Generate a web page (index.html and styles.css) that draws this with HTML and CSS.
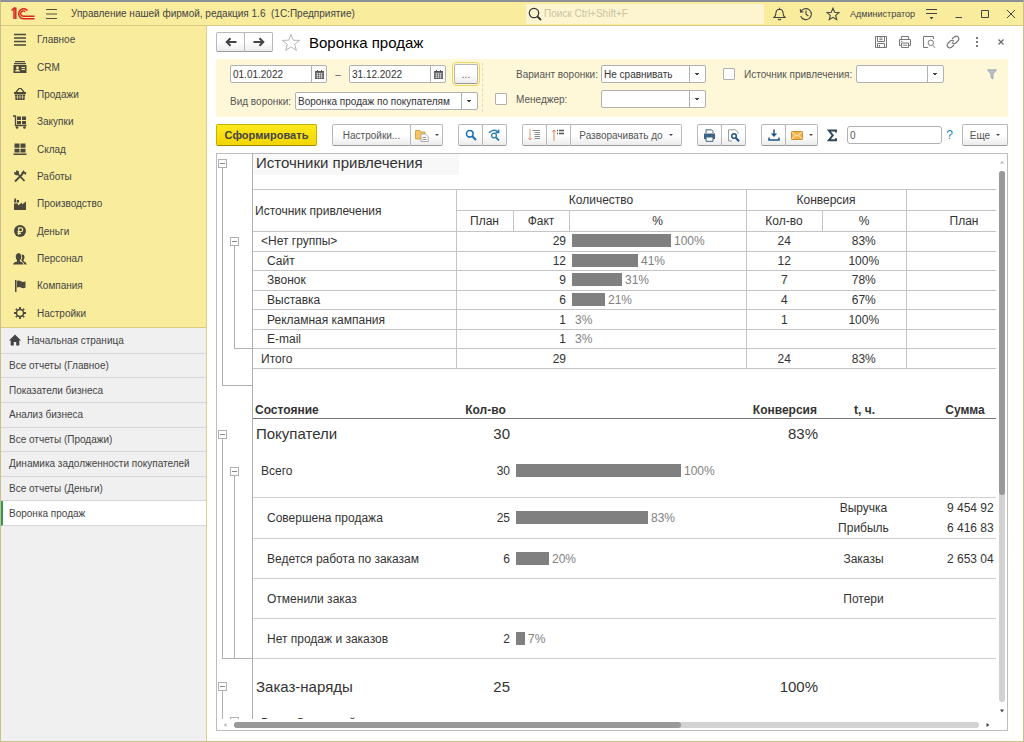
FILE: index.html
```html
<!DOCTYPE html>
<html lang="ru">
<head>
<meta charset="utf-8">
<meta name="viewport" content="width=device-width, initial-scale=1">
<title>Воронка продаж</title>
<link rel="stylesheet" href="styles.css">
</head>

<body>
<div class="window">

<header class="titlebar">
  <svg class="logo" width="24" height="13" viewBox="0 0 24 13" fill="none" stroke="#d9251c">
    <path d="M0.5 3.5L3 1.2V12M3 1.2H4.8V12" stroke-width="1.5"/>
    <path d="M16.5 3.6A5 5 0 1 0 12.5 11.8H23.5" stroke-width="1.5"/>
    <path d="M14.3 4.8A2.7 2.7 0 1 0 12.5 9.3H23.5" stroke-width="1.4"/>
  </svg>
  <button class="flat" aria-label="Меню">
    <svg width="13" height="12" viewBox="0 0 13 12" stroke="#55513a"><path d="M1 1.5H12M1 6H12M1 10.5H12"/></svg>
  </button>
  <span class="app-name">Управление нашей фирмой, редакция 1.6&nbsp; (1С:Предприятие)</span>
  <label class="search">
    <svg width="14" height="14" viewBox="0 0 14 14" fill="none" stroke="#333"><circle cx="6" cy="6" r="4.7" stroke-width="1.2"/><path d="M9.5 9.5L13 13" stroke-width="1.8"/></svg>
    <input type="text" placeholder="Поиск Ctrl+Shift+F">
  </label>
  <div class="title-tools">
    <button class="flat" aria-label="Оповещения">
      <svg width="13" height="14" viewBox="0 0 13 14" fill="none" stroke="#444"><path d="M1 10.5Q3 9 3 5.5Q3.2 2.5 6.5 2.2Q9.8 2.5 10 5.5Q10 9 12 10.5ZM6.5 2V0.8M5 12Q6.5 13.6 8 12" stroke-width="1.1"/></svg>
    </button>
    <button class="flat" aria-label="История">
      <svg width="14" height="14" viewBox="0 0 14 14" fill="none" stroke="#444"><path d="M1.8 5A5.5 5.5 0 1 1 1.7 9M1.2 2.2L1.7 5.2L4.6 4.8M7 3.6V7.3L9.4 9" stroke-width="1.1"/></svg>
    </button>
    <button class="flat" aria-label="Избранное">
      <svg width="14" height="14" viewBox="0 0 14 14" fill="none" stroke="#444"><path d="M7 1.2L8.7 5.2L13 5.6L9.7 8.4L10.7 12.7L7 10.4L3.3 12.7L4.3 8.4L1 5.6L5.3 5.2Z" stroke-width="1.1"/></svg>
    </button>
    <a class="user" href="#">Администратор</a>
    <button class="flat" aria-label="Сервис">
      <svg width="13" height="12" viewBox="0 0 13 12" stroke="#444"><path d="M1 1.5H12M1 5.5H12"/><path d="M4.5 9H8.5L6.5 11.5Z" fill="#444" stroke="none"/></svg>
    </button>
  </div>
  <div class="window-tools">
    <button class="flat" aria-label="Свернуть"><svg width="10" height="10" viewBox="0 0 10 10" stroke="#444"><path d="M1.5 8.5H8"/></svg></button>
    <button class="flat" aria-label="Развернуть"><svg width="10" height="10" viewBox="0 0 10 10" fill="none" stroke="#444"><path d="M1.5 1.5H8.5V8.5H1.5Z"/></svg></button>
    <button class="flat" aria-label="Закрыть"><svg width="10" height="10" viewBox="0 0 10 10" stroke="#444"><path d="M1 1L9 9M9 1L1 9"/></svg></button>
  </div>
</header>

<div class="workspace">

<aside class="sidebar">
  <nav class="sections">
    <a href="#"><svg viewBox="0 0 14 14"><path d="M1 1.5H13M1 5H13M1 8.5H13M1 12H13" stroke="#4b483c" stroke-width="1.5"/></svg>Главное</a>
    <a href="#"><svg viewBox="0 0 14 14"><path d="M2 1H12V2.2H2ZM1 3H13V4.2H1ZM0.5 5H13.5V13H0.5Z"/><path d="M2 11.5Q2 9.5 4.5 9.3Q7 9.5 7 11.5ZM4.5 6.3A1.4 1.4 0 1 1 4.4 6.3ZM8.5 7H12V8H8.5ZM8.5 9H12V10H8.5Z" fill="#f9ec9c"/></svg>CRM</a>
    <a href="#"><svg viewBox="0 0 14 14"><path d="M1 5H13V7H1ZM1.7 7.5H12.3L11.5 13H2.5Z"/><path d="M3 5L6 1.5H8L11 5" fill="none" stroke="#4b483c" stroke-width="1.2"/><path d="M4.5 8V12.5M7 8V12.5M9.5 8V12.5M2 10H12" stroke="#f9ec9c" stroke-width="0.6"/></svg>Продажи</a>
    <a href="#"><svg viewBox="0 0 14 14"><path d="M0 1H2.5V10.5H13.5" fill="none" stroke="#4b483c" stroke-width="1.3"/><path d="M4 1.5H8V5H4ZM9 1.5H13V5H9ZM4 6H8V9.2H4ZM9 6H13V9.2H9Z"/><circle cx="4" cy="12.5" r="1.3"/><circle cx="11.5" cy="12.5" r="1.3"/></svg>Закупки</a>
    <a href="#"><svg viewBox="0 0 14 14"><path d="M1.5 1.5H6.5V5.7H1.5ZM7.5 1.5H12.5V5.7H7.5ZM1.5 6.7H6.5V10.5H1.5ZM7.5 6.7H12.5V10.5H7.5ZM0.5 11.5H13.5V13H0.5Z"/></svg>Склад</a>
    <a href="#"><svg viewBox="0 0 14 14"><path d="M4 4L11.5 12M9.5 5L2 12.5" stroke="#4b483c" stroke-width="1.8"/><path d="M1 3L3 3.2L3.5 1L6 2.5V5L4 6.5L1.5 5.5ZM8 4L11 1L11.3 2.7L13.5 3.5L12.5 6L11 4.5L9.5 6Z"/></svg>Работы</a>
    <a href="#"><svg viewBox="0 0 14 14"><path d="M1 6.5H5V8.5L9 5.5V7.5L13 4.5V13H1ZM1 5.5L1.5 1.5H3L3.5 5.5ZM4 5.5V3H6V5.5Z"/></svg>Производство</a>
    <a href="#"><svg viewBox="0 0 14 14"><circle cx="7" cy="7" r="6"/><path d="M5.7 11V3.8H7.8A1.9 1.9 0 0 1 7.8 7.6H4.5M4.5 9.3H8" fill="none" stroke="#f9ec9c" stroke-width="1.2"/></svg>Деньги</a>
    <a href="#"><svg viewBox="0 0 14 14"><path d="M0 12.5Q0.5 10 4 9.5L4 8Q2.5 6.5 2.8 3.5Q3.5 1 5.5 1Q7.7 1 8.2 3.5Q8.5 6.5 7 8V9.5Q10 10 10.5 12.5Z"/><path d="M8.8 2.5Q11.5 2 11.5 5Q11.4 7 10.5 8V9Q13.5 10 13.8 12.5H11.5Q11 10.5 8.5 9L8.3 8Q9.8 6 8.8 2.5Z"/></svg>Персонал</a>
    <a href="#"><svg viewBox="0 0 14 14"><path d="M2 1H3.5V13H2ZM4 2Q6 1 8 2.3Q10 3.5 12.5 2.3V8.5Q10 9.8 8 8.5Q6 7.3 4 8.5Z"/></svg>Компания</a>
    <a href="#"><svg viewBox="0 0 14 14" stroke="#4b483c"><circle cx="7" cy="7" r="3.5" stroke-width="1.5" fill="none"/><path d="M7 1V3M7 11V13M1 7H3M11 7H13M2.8 2.8L4.2 4.2M9.8 9.8L11.2 11.2M2.8 11.2L4.2 9.8M9.8 4.2L11.2 2.8" stroke-width="1.8"/></svg>Настройки</a>
  </nav>
  <nav class="tabs">
    <a class="home" href="#"><svg width="12" height="12" viewBox="0 0 12 12" fill="#444"><path d="M6 0.5L12 6.5H10.3V11.5H7.2V8H4.8V11.5H1.7V6.5H0Z"/></svg>Начальная страница</a>
    <a href="#">Все отчеты (Главное)</a>
    <a href="#">Показатели бизнеса</a>
    <a href="#">Анализ бизнеса</a>
    <a href="#">Все отчеты (Продажи)</a>
    <a href="#">Динамика задолженности покупателей</a>
    <a href="#">Все отчеты (Деньги)</a>
    <a class="active" href="#">Воронка продаж</a>
  </nav>
</aside>

<main class="form">
  <div class="form-head">
    <div class="btn-group">
      <button class="btn nav-btn" aria-label="Назад"><svg width="12" height="10" viewBox="0 0 12 10" fill="none" stroke="#444" stroke-width="2"><path d="M11.5 5H2M5.5 1.2L1.7 5L5.5 8.8"/></svg></button>
      <button class="btn nav-btn" aria-label="Вперед"><svg width="12" height="10" viewBox="0 0 12 10" fill="none" stroke="#444" stroke-width="2"><path d="M0.5 5H10M6.5 1.2L10.3 5L6.5 8.8"/></svg></button>
    </div>
    <button class="flat" aria-label="В избранное">
      <svg width="20" height="19" viewBox="0 0 20 19" fill="none" stroke="#b4b4b4"><path d="M10 1.5L12.2 7.2L18.6 7.4L13.6 11.3L15.4 17.4L10 13.8L4.6 17.4L6.4 11.3L1.4 7.4L7.8 7.2Z"/></svg>
    </button>
    <h1>Воронка продаж</h1>
    <div class="form-tools">
      <button class="flat" aria-label="Сохранить"><svg width="14" height="14" viewBox="0 0 14 14" fill="none" stroke="#777"><path d="M1.5 1.5H12.5V12.5H1.5ZM3.5 1.5V6.5H10.5V1.5M3.5 12.5V8.5H10.5V12.5M5.5 3H8.5M5.5 4.7H8.5M5.5 10V12"/></svg></button>
      <button class="flat" aria-label="Печать"><svg width="14" height="14" viewBox="0 0 14 14" fill="none" stroke="#777"><path d="M3.5 4.5V1.5H10.5V4.5M3 10.5H1.5V4.5H12.5V10.5H11M3.5 8H10.5V12.5H3.5ZM5 10.2H9M3 6.3H4.5"/></svg></button>
      <button class="flat" aria-label="Просмотр"><svg width="14" height="14" viewBox="0 0 14 14" fill="none" stroke="#777"><path d="M6 12.5H1.5V1.5H11.5V4M10.8 10.2L13 12.8"/><circle cx="8.8" cy="7.8" r="2.7"/></svg></button>
      <button class="flat" aria-label="Ссылка"><svg width="14" height="14" viewBox="0 0 14 14" fill="none" stroke="#777" stroke-width="1.2"><path d="M6 4L8.5 1.7Q10.5 0.5 12.2 2Q13.5 3.7 12.2 5.5L9.5 8.2Q7.5 9.3 6 7.5M8 10L5.5 12.3Q3.5 13.5 1.8 12Q0.5 10.3 1.8 8.5L4.5 5.8Q6.5 4.7 8 6.5"/></svg></button>
      <button class="flat" aria-label="Еще"><svg width="14" height="14" viewBox="0 0 14 14" fill="#777"><path d="M6 2H8V4H6ZM6 6H8V8H6ZM6 10H8V12H6Z"/></svg></button>
      <button class="flat" aria-label="Закрыть форму"><svg width="14" height="14" viewBox="0 0 14 14" stroke="#666"><path d="M4.5 4.5L9.5 9.5M9.5 4.5L4.5 9.5" stroke-width="1.2"/></svg></button>
    </div>
  </div>

  <div class="filters">
    <div class="period">
      <div class="filter-row">
        <span class="field"><input type="text" value="01.01.2022" aria-label="Начало периода"><button aria-label="Выбрать дату"><svg width="9" height="9" viewBox="0 0 9 9"><path d="M0 1H9V9H0Z" fill="#555"/><path d="M0.5 3.2H8.5M0.5 5.2H8.5M0.5 7.2H8.5M2.5 3V8.5M4.5 3V8.5M6.5 3V8.5" stroke="#fff" stroke-width="0.5"/><path d="M2.5 0V2M6.5 0V2" stroke="#555"/></svg></button></span>
        <span class="dash">–</span>
        <span class="field"><input type="text" value="31.12.2022" aria-label="Конец периода"><button aria-label="Выбрать дату"><svg width="9" height="9" viewBox="0 0 9 9"><path d="M0 1H9V9H0Z" fill="#555"/><path d="M0.5 3.2H8.5M0.5 5.2H8.5M0.5 7.2H8.5M2.5 3V8.5M4.5 3V8.5M6.5 3V8.5" stroke="#fff" stroke-width="0.5"/><path d="M2.5 0V2M6.5 0V2" stroke="#555"/></svg></button></span>
        <button class="btn dots">...</button>
      </div>
      <div class="filter-row">
        <label for="kind">Вид воронки:</label>
        <span class="select kind"><select id="kind"><option>Воронка продаж по покупателям</option></select></span>
      </div>
    </div>
    <div class="middle">
      <label class="variant-label" for="variant">Вариант воронки:</label>
      <span class="select"><select id="variant"><option>Не сравнивать</option></select></span>
      <input type="checkbox" id="use-manager">
      <label for="use-manager">Менеджер:</label>
      <span class="select"><select aria-label="Менеджер"><option></option></select></span>
    </div>
    <div class="source">
      <input type="checkbox" id="use-source">
      <label for="use-source">Источник привлечения:</label>
      <span class="select narrow"><select aria-label="Источник привлечения"><option></option></select></span>
    </div>
    <button class="flat funnel" aria-label="Отборы"><svg width="10" height="11" viewBox="0 0 10 11"><path d="M0.5 0.8H9.5L6 5V10L4 8.5V5Z" fill="#b9c3cc" stroke="#93a0aa" stroke-width="0.8"/></svg></button>
  </div>

  <div class="toolbar">
    <button class="btn primary">Сформировать</button>
    <div class="btn-group">
      <button class="btn settings">Настройки...</button>
      <button class="btn drop" aria-label="Варианты отчета"><svg width="14" height="13" viewBox="0 0 14 13"><path d="M0.5 1.5H5L6 3H10V10H0.5Z" fill="#f3c65f" stroke="#c99a35" stroke-width="0.8"/><path d="M6 5H10.5L13.2 7.5V12.5H6Z" fill="#fff" stroke="#999" stroke-width="0.8"/><path d="M7.5 8.5H11M7.5 10.5H11.5" stroke="#8a8fa0"/></svg></button>
    </div>
    <div class="btn-group">
      <button class="btn icon" aria-label="Найти"><svg width="12" height="12" viewBox="0 0 12 12" fill="none" stroke="#2273b4"><circle cx="4.8" cy="4.8" r="3.3" stroke-width="1.6"/><path d="M7.3 7.3L11 11" stroke-width="2.2"/></svg></button>
      <button class="btn icon" aria-label="Найти далее"><svg width="13" height="12" viewBox="0 0 13 12" fill="none" stroke="#2a7fb0"><circle cx="6" cy="6.5" r="2.4" stroke-width="1.3"/><path d="M8 8.5L11 11.5" stroke-width="1.8"/><path d="M0.8 3.8Q5.5 -0.5 10 2.5M10.8 0.5V3.5H7.5" stroke-width="1.3"/></svg></button>
    </div>
    <div class="btn-group">
      <button class="btn icon" aria-label="Развернуть группы"><svg width="13" height="12" viewBox="0 0 13 12"><path d="M2 0V11M0.3 8.8L2 11L3.7 8.8" fill="none" stroke="#ec9a72"/><path d="M4.5 1.5H12M6.5 3.5H12M6.5 5.5H12M6.5 7.5H12M6.5 9.5H12" stroke="#888"/></svg></button>
      <button class="btn icon" aria-label="Свернуть группы"><svg width="13" height="12" viewBox="0 0 13 12"><path d="M2 12V1M0.3 3.2L2 1L3.7 3.2" fill="none" stroke="#e8834f"/><path d="M5 1.5H6M7 1.5H12M5 4.5H6M7 4.5H12" stroke="#555" stroke-width="1.4"/></svg></button>
      <button class="btn expand drop">Разворачивать до</button>
    </div>
    <div class="btn-group">
      <button class="btn icon" aria-label="Печать отчета"><svg width="13" height="13" viewBox="0 0 13 13"><path d="M3 4V0.8H8.5L10 2.3V4" fill="#fff" stroke="#3e6285"/><path d="M1 4.5H12V10H1Z" fill="#3e6285"/><path d="M3 8H10V12.3H3Z" fill="#fff" stroke="#3e6285"/></svg></button>
      <button class="btn icon" aria-label="Предварительный просмотр"><svg width="13" height="13" viewBox="0 0 13 13" fill="none"><path d="M5 12H1.5V0.8H8.5L11 3.5V5" stroke="#999"/><circle cx="7" cy="7" r="2.3" stroke="#1c5587" stroke-width="1.5"/><path d="M8.7 8.7L12 12.2" stroke="#1c5587" stroke-width="2"/></svg></button>
    </div>
    <div class="btn-group">
      <button class="btn icon" aria-label="Сохранить отчет"><svg width="12" height="12" viewBox="0 0 12 12" fill="none" stroke="#1c5587" stroke-width="1.5"><path d="M6 0.5V6.5M1 8.5V11H11V8.5"/><path d="M2.8 4.5H9.2L6 8Z" fill="#1c5587" stroke="none"/></svg></button>
      <button class="btn drop" aria-label="Отправить"><svg width="12" height="9" viewBox="0 0 12 9"><path d="M0.5 0.5H11.5V8.5H0.5Z" fill="#f2b34c" stroke="#cf8e2c"/><path d="M0.5 0.8L6 5.2L11.5 0.8M0.5 8.2L4.5 4.2M11.5 8.2L7.5 4.2" fill="none" stroke="#fff1cf" stroke-width="0.9"/></svg></button>
    </div>
    <label class="sum"><svg width="10" height="13" viewBox="0 0 10 13" fill="none" stroke="#2f4656" stroke-width="1.9"><path d="M9 3.5V1.5H1.8L5.8 6.3L1.8 11.3H9V9.3"/></svg><input type="text" value="0" aria-label="Сумма"></label>
    <a class="help" href="#">?</a>
    <button class="btn more drop">Еще</button>
  </div>

  <div class="sheet">
    <div class="sheet-view">

      <section class="group sources">
        <div class="gutter">
          <div class="branch outer"><button class="toggle" aria-label="Свернуть"></button></div>
          <div class="branch inner"><button class="toggle" aria-label="Свернуть"></button></div>
        </div>
        <div class="cells">
          <h2>Источники привлечения</h2>
          <table class="grid">
            <colgroup><col class="c-name"><col class="c-plan"><col class="c-fact"><col class="c-bar"><col class="c-conv"><col class="c-pct"><col class="c-last"></colgroup>
            <thead>
              <tr><th class="left" rowspan="2">Источник привлечения</th><th colspan="3">Количество</th><th colspan="2">Конверсия</th><th></th></tr>
              <tr><th>План</th><th>Факт</th><th>%</th><th>Кол-во</th><th>%</th><th>План</th></tr>
            </thead>
            <tbody>
              <tr><td class="top">&lt;Нет группы&gt;</td><td></td><td class="num">29</td><td class="meter"><i style="width:99px"></i>100%</td><td>24</td><td>83%</td><td></td></tr>
              <tr><td>Сайт</td><td></td><td class="num">12</td><td class="meter"><i style="width:66px"></i>41%</td><td>12</td><td>100%</td><td></td></tr>
              <tr><td>Звонок</td><td></td><td class="num">9</td><td class="meter"><i style="width:50px"></i>31%</td><td>7</td><td>78%</td><td></td></tr>
              <tr><td>Выставка</td><td></td><td class="num">6</td><td class="meter"><i style="width:33px"></i>21%</td><td>4</td><td>67%</td><td></td></tr>
              <tr><td>Рекламная кампания</td><td></td><td class="num">1</td><td class="meter"><i></i>3%</td><td>1</td><td>100%</td><td></td></tr>
              <tr><td>E-mail</td><td></td><td class="num">1</td><td class="meter"><i></i>3%</td><td></td><td></td><td></td></tr>
              <tr><td class="top">Итого</td><td></td><td class="num">29</td><td></td><td>24</td><td>83%</td><td></td></tr>
            </tbody>
          </table>
        </div>
      </section>

      <section class="group">
        <div class="gutter"></div>
        <div class="cells">
          <table class="funnel-table">
            <colgroup><col class="f-name"><col class="f-count"><col class="f-bar"><col class="f-conv"><col class="f-time"><col class="f-sum"></colgroup>
            <thead>
              <tr><th>Состояние</th><th class="mid">Кол-во</th><th></th><th class="right">Конверсия</th><th class="mid">t, ч.</th><th class="mid">Сумма</th></tr>
            </thead>
          </table>
        </div>
      </section>

      <section class="group">
        <div class="gutter">
          <div class="branch outer"><button class="toggle" aria-label="Свернуть"></button></div>
          <div class="branch inner"><button class="toggle" aria-label="Свернуть"></button></div>
        </div>
        <div class="cells">
          <table class="funnel-table">
            <colgroup><col class="f-name"><col class="f-count"><col class="f-bar"><col class="f-conv"><col class="f-time"><col class="f-sum"></colgroup>
            <tbody>
              <tr class="head"><td>Покупатели</td><td class="num">30</td><td></td><td class="num">83%</td><td></td><td></td></tr>
              <tr class="total"><td>Всего</td><td class="num">30</td><td class="meter"><i style="width:165px"></i>100%</td><td></td><td></td><td></td></tr>
              <tr><td>Совершена продажа</td><td class="num">25</td><td class="meter"><i style="width:132px"></i>83%</td><td></td><td class="mid lines">Выручка<br>Прибыль</td><td class="money lines">9 454 92<br>6 416 83</td></tr>
              <tr><td>Ведется работа по заказам</td><td class="num">6</td><td class="meter"><i style="width:33px"></i>20%</td><td></td><td class="mid">Заказы</td><td class="money">2 653 04</td></tr>
              <tr><td>Отменили заказ</td><td></td><td></td><td></td><td class="mid">Потери</td><td></td></tr>
              <tr><td>Нет продаж и заказов</td><td class="num">2</td><td class="meter"><i style="width:9px"></i>7%</td><td></td><td></td><td></td></tr>
            </tbody>
          </table>
        </div>
      </section>

      <section class="group orders">
        <div class="gutter">
          <div class="branch outer"><button class="toggle" aria-label="Свернуть"></button></div>
          <div class="branch inner"><button class="toggle" aria-label="Свернуть"></button></div>
        </div>
        <div class="cells">
          <table class="funnel-table">
            <colgroup><col class="f-name"><col class="f-count"><col class="f-bar"><col class="f-conv"><col class="f-time"><col class="f-sum"></colgroup>
            <tbody>
              <tr class="head"><td>Заказ-наряды</td><td class="num">25</td><td></td><td class="num">100%</td><td></td><td></td></tr>
              <tr class="total"><td>Всего Состояний</td><td></td><td></td><td></td><td></td><td></td></tr>
            </tbody>
          </table>
        </div>
      </section>

    </div>
    <div class="scroll vertical">
      <svg width="6" height="4" viewBox="0 0 6 4" fill="#bbb"><path d="M1 3.5H5L3 0.5Z"/></svg>
      <div class="track"><div class="thumb"></div></div>
      <svg width="6" height="4" viewBox="0 0 6 4" fill="#444"><path d="M1 0.5H5L3 3.5Z"/></svg>
    </div>
    <div class="scroll horizontal">
      <svg width="4" height="6" viewBox="0 0 4 6" fill="#bbb"><path d="M3.5 1V5L0.5 3Z"/></svg>
      <div class="track"><div class="thumb"></div></div>
      <svg width="4" height="6" viewBox="0 0 4 6" fill="#444"><path d="M0.5 1V5L3.5 3Z"/></svg>
    </div>
  </div>
</main>

</div>
</div>
</body>
</html>
```
FILE: styles.css
```css
* {
    box-sizing: border-box;
}

body {
    margin: 0;
    font-family: "Liberation Sans", Arial, sans-serif;
    font-size: 10px;
    color: #444;
}

button, input, select {
    font: inherit;
    color: inherit;
    margin: 0;
}

button {
    padding: 0;
    white-space: nowrap;
}

label {
    white-space: nowrap;
}

a {
    color: inherit;
    text-decoration: none;
}

svg {
    flex: none;
}

.window {
    display: flex;
    flex-direction: column;
    height: 100vh;
    border: 1px solid #c9c08a;
    border-top: 2px solid #8d9097;
    background: #fff;
}

.flat {
    display: flex;
    align-items: center;
    justify-content: center;
    border: 0;
    background: none;
}

/* title bar */

.titlebar {
    display: flex;
    align-items: center;
    flex: none;
    height: 24px;
    padding: 0 7px 0 10px;
    background: #f9ec9c;
    border-bottom: 1px solid #d8cc84;
}

.titlebar .logo {
    margin-right: 10px;
}

.app-name {
    flex: 1;
    margin-left: 13px;
    white-space: nowrap;
}

.search {
    display: flex;
    align-items: center;
    flex: 0 1 238px;
    height: 20px;
    gap: 2px;
    padding-left: 2px;
    background: #fdf5cf;
}

.search input {
    flex: 1;
    min-width: 0;
    padding: 0;
    border: 0;
    outline: 0;
    background: none;
}

.search input::placeholder {
    color: #c9c3a4;
}

.title-tools {
    display: flex;
    align-items: center;
    gap: 13px;
    margin-left: 9px;
}

.title-tools .user {
    margin: 0 -3px;
    font-size: 9px;
}

.window-tools {
    display: flex;
    gap: 16px;
    margin-left: 16px;
}

/* sidebar */

.workspace {
    display: flex;
    flex: 1;
    min-height: 0;
}

.sidebar {
    flex: none;
    width: 206px;
    background: #f0f0f0;
    border-right: 1px solid #dcd18c;
}

.sections, .tabs {
    display: flex;
    flex-direction: column;
}

.sections {
    min-height: 302px;
    background: #f9ec9c;
    border-bottom: 1px solid #d8cc84;
}

.sections a {
    display: flex;
    flex: 1;
    align-items: center;
    gap: 10px;
    padding-left: 12px;
}

.sections svg {
    width: 14px;
    height: 14px;
    fill: #4b483c;
}

.tabs {
    min-height: 198px;
}

.tabs a {
    display: flex;
    flex: 1;
    align-items: center;
    padding-left: 8px;
    border-bottom: 1px solid #d6d6d6;
    white-space: nowrap;
}

.tabs .home {
    gap: 6px;
}

.tabs .active {
    padding-left: 6px;
    border-left: 2px solid #2f9a58;
    background: #fff;
}

/* form */

.form {
    display: flex;
    flex: 1;
    flex-direction: column;
    min-width: 0;
    padding: 6px 15px 10px 9px;
}

.form-head {
    display: flex;
    align-items: center;
    flex: none;
    height: 20px;
}

h1, h2 {
    margin: 0;
    font-weight: normal;
    font-size: 15px;
    color: #000;
}

.form-head h1 {
    flex: 1;
    margin-left: 8px;
}

.form-head > .flat {
    margin-left: 8px;
}

.form-tools {
    display: flex;
    gap: 10px;
}

.btn-group {
    display: flex;
    flex: none;
}

.btn {
    display: flex;
    flex: none;
    align-items: center;
    justify-content: center;
    height: 22px;
    border: 1px solid #b8b8b8;
    border-bottom-color: #999;
    border-radius: 2px;
    background: linear-gradient(#fff, #fff 50%, #ececec);
}

.btn-group .btn + .btn {
    margin-left: -1px;
    border-top-left-radius: 0;
    border-bottom-left-radius: 0;
}

.nav-btn {
    width: 29px;
    height: 20px;
}

.filters {
    display: flex;
    flex: none;
    margin-top: 7px;
    padding: 4px 11px 5px 14px;
    background: #fff8d8;
    color: #555;
}

.filter-row {
    display: flex;
    align-items: center;
    height: 22px;
}

.period {
    padding-right: 4px;
    border-right: 1px dashed #e2dcb8;
}

.period .filter-row + .filter-row {
    margin-top: 5px;
}

.field {
    display: flex;
    height: 18px;
    border: 1px solid #b0b0b0;
    border-radius: 2px;
    background: #fff;
    color: #333;
}

.field input {
    width: 80px;
    padding: 0 2px;
    border: 0;
    background: none;
}

.field button {
    display: flex;
    align-items: center;
    justify-content: center;
    width: 15px;
    border: 0;
    border-left: 1px solid #b0b0b0;
    background: none;
}

.dash {
    width: 22px;
    text-align: center;
}

.dots {
    width: 24px;
    height: 20px;
    margin-left: 8px;
    outline: 1px solid #efd75c;
    outline-offset: 1px;
}

.select {
    position: relative;
    display: flex;
    flex: none;
    width: 105px;
    height: 18px;
}

.select select {
    width: 100%;
    padding: 0 18px 0 2px;
    border: 1px solid #b0b0b0;
    border-radius: 2px;
    background: #fff;
    color: #333;
    appearance: none;
}

/* drop-down arrow cell of a select */
.select::after {
    content: "";
    position: absolute;
    top: 1px;
    right: 1px;
    bottom: 1px;
    width: 15px;
    border-left: 1px solid #b0b0b0;
    background: linear-gradient(#444, #444) 5px 7px / 4px 1px no-repeat, linear-gradient(#444, #444) 6px 8px / 2px 1px no-repeat;
    pointer-events: none;
}

.select.kind {
    width: 183px;
    margin-left: 4px;
}

.select.narrow {
    width: 88px;
}

.middle {
    display: grid;
    grid-template-columns: 21px 85px auto;
    grid-auto-rows: 22px;
    row-gap: 3px;
    align-items: center;
    align-content: start;
    margin-left: 12px;
}

.variant-label {
    grid-column: 2;
}

.source {
    display: flex;
    flex: 1;
    align-items: center;
    height: 22px;
    margin-left: 17px;
}

.source label {
    margin: 0 4px 0 9px;
}

input[type="checkbox"] {
    width: 12px;
    height: 12px;
    border: 1px solid #b0b0b0;
    border-radius: 1px;
    background: #fff;
    appearance: none;
}

.funnel {
    height: 22px;
}

.toolbar {
    display: flex;
    flex: none;
    align-items: center;
    gap: 15px;
    margin: 7px 0;
    color: #555;
}

.primary {
    width: 101px;
    border-color: #c8b000;
    border-bottom-color: #9c8900;
    background: linear-gradient(#ffe91f, #f2d500);
    font-weight: bold;
    font-size: 11px;
    color: #444;
}

.settings {
    width: 79px;
}

.icon {
    width: 25px;
}

.drop {
    min-width: 33px;
    gap: 6px;
    padding: 0 3px;
}

.drop::after {
    content: "";
    border: 2px solid transparent;
    border-top-color: #444;
    border-bottom: 0;
}

.expand {
    width: 112px;
}

.sum {
    display: flex;
    flex: 1;
    align-items: center;
    gap: 10px;
    min-width: 0;
    margin-left: -6px;
}

.sum input {
    flex: 1;
    min-width: 0;
    height: 18px;
    padding: 0 2px;
    border: 1px solid #b0b0b0;
    border-radius: 3px;
}

.help {
    margin: 0 -6px 0 -11px;
    font-size: 12px;
    color: #1f7fc0;
}

.more {
    width: 46px;
}

/* report sheet */

.sheet {
    display: grid;
    flex: 1;
    grid-template-columns: minmax(0, 1fr) 11px;
    grid-template-rows: minmax(0, 1fr) 11px;
    min-height: 0;
    border: 1px solid #bdbdbd;
    font-size: 12px;
    color: #333;
}

.sheet-view {
    overflow: hidden;
}

.group {
    display: grid;
    grid-template-columns: 35px minmax(0, 1fr);
}

.gutter {
    display: grid;
    grid-template-columns: 12px 1fr;
    padding-left: 1px;
}

.cells {
    border-left: 1px solid #b0b0b0;
    overflow: hidden;
}

.branch {
    display: flex;
    flex-direction: column;
    grid-row: 1;
}

.branch.outer {
    grid-column: 1 / -1;
    padding-top: 11px;
}

.branch.inner {
    grid-column: 2;
    padding-top: 48px;
}

.branch::after {
    content: "";
    flex: 1;
    margin-left: 4px;
    border-left: 1px solid #b0b0b0;
    border-bottom: 1px solid #b0b0b0;
}

.toggle {
    flex: none;
    width: 9px;
    height: 9px;
    border: 1px solid #b0b0b0;
    background: linear-gradient(#888, #888) 1px 3px / 5px 1px no-repeat #fff;
}

.sources .outer {
    padding-top: 5px;
}

.sources .inner {
    padding-top: 83px;
    padding-bottom: 37px;
}

.sources .cells {
    padding-bottom: 17px;
}

h2 {
    width: 206px;
    height: 21px;
    margin-bottom: 14px;
    padding-left: 3px;
    background: #f8f8f8;
    line-height: 18px;
    color: #333;
}

table {
    border-collapse: collapse;
    table-layout: fixed;
}

th, td {
    padding: 0;
    white-space: nowrap;
    line-height: 16px;
}

.grid {
    width: 769px;
    height: 180px;
}

.c-name { width: 203px; }
.c-plan { width: 57px; }
.c-fact { width: 56px; }
.c-bar { width: 177px; }
.c-conv { width: 76px; }
.c-pct { width: 84px; }
.c-last { width: 116px; }

.grid th {
    height: 21px;
    border: 1px solid #c4c4c4;
    border-left-width: 0;
    font-weight: normal;
}

.grid th.left {
    padding-left: 2px;
    text-align: left;
}

.grid td {
    border-bottom: 1px solid #c4c4c4;
    text-align: center;
}

.grid td:nth-child(1), .grid td:nth-child(4), .grid td:nth-child(6) {
    border-right: 1px solid #c4c4c4;
}

.grid td:first-child {
    padding-left: 14px;
    text-align: left;
}

.grid td.top {
    padding-left: 8px;
}

.grid td.num, .funnel-table .num {
    padding-right: 3px;
    text-align: right;
}

.grid td.meter, .meter {
    padding-left: 3px;
    text-align: left;
    color: #808080;
}

.meter i {
    display: inline-block;
    height: 13px;
    margin-right: 3px;
    background: #808080;
    vertical-align: -2px;
}

.funnel-table {
    width: 769px;
}

.f-name { width: 203px; }
.f-count { width: 57px; }
.f-bar { width: 212px; }
.f-conv { width: 96px; }
.f-time { width: 85px; }
.f-sum { width: 116px; }

.funnel-table th {
    height: 32px;
    padding-left: 2px;
    border-bottom: 1px solid #777;
    text-align: left;
    vertical-align: bottom;
}

.funnel-table td {
    height: 40px;
    border-bottom: 1px solid #d0d0d0;
}

.funnel-table td:first-child {
    padding-left: 14px;
}

.funnel-table .right {
    padding-right: 4px;
    text-align: right;
}

.funnel-table .mid {
    text-align: center;
}

.funnel-table .money {
    padding-left: 41px;
}

.funnel-table .lines {
    line-height: 20px;
}

.funnel-table .head td {
    height: 26px;
    border: 0;
    padding-top: 4px;
    font-size: 15px;
}

.funnel-table .head td:first-child {
    padding-left: 3px;
}

.funnel-table .total td {
    height: 53px;
}

.funnel-table .total td:first-child {
    padding-left: 8px;
}

.orders .outer {
    padding-top: 23px;
}

.orders .inner {
    padding-top: 58px;
}

.orders .head td {
    height: 52px;
}

.orders .total td {
    height: 24px;
}

/* scroll bars */

.scroll {
    display: flex;
    align-items: center;
    gap: 7px;
}

.track {
    flex: 1;
    border-radius: 4px;
    background: #d2d2d2;
}

.thumb {
    border-radius: 4px;
    background: #999;
}

.vertical {
    flex-direction: column;
    padding: 6px 0;
}

.vertical .track {
    width: 6px;
}

.vertical .thumb {
    height: 61%;
}

.horizontal {
    padding: 0 6px;
}

.horizontal .track {
    height: 6px;
}

.horizontal .thumb {
    width: 60%;
    height: 6px;
}
```
